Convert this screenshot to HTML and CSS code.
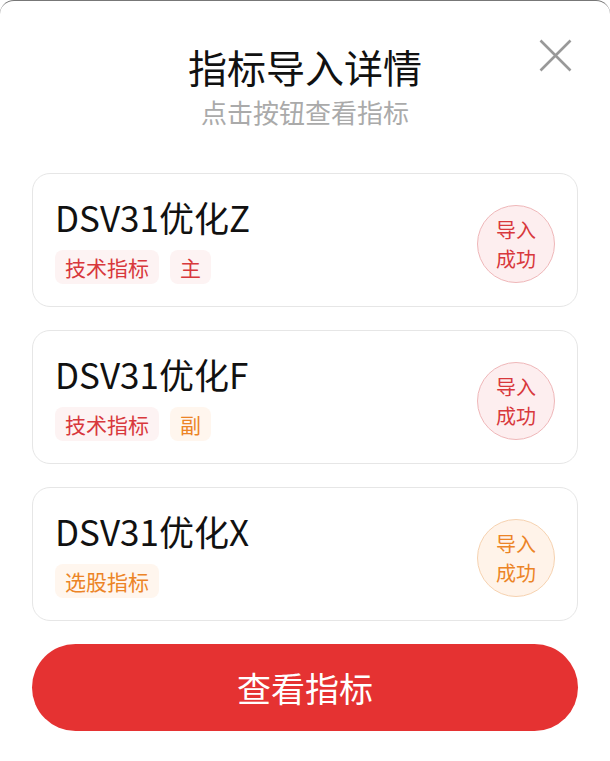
FILE: index.html
```html
<!DOCTYPE html>
<html lang="zh-CN">
<head>
    <meta charset="UTF-8">
    <meta name="viewport" content="width=device-width, initial-scale=1.0">
    <title>指标导入详情</title>
    <link rel="stylesheet" href="styles.css">
</head>
<body>

<div class="sheet">
    <button class="close" aria-label="关闭">
        <svg width="33" height="33" viewBox="0 0 33 33">
            <path d="M1.5 1.5 L31.5 31.5 M31.5 1.5 L1.5 31.5" stroke="#999" stroke-width="2.6" fill="none"/>
        </svg>
    </button>

    <h1 class="title">指标导入详情</h1>
    <p class="subtitle">点击按钮查看指标</p>

    <div class="list">
        <div class="card">
            <div class="info">
                <div class="name">DSV31优化Z</div>
                <div class="tags">
                    <span class="tag red">技术指标</span>
                    <span class="tag red">主</span>
                </div>
            </div>
            <div class="badge red">导入<br>成功</div>
        </div>

        <div class="card">
            <div class="info">
                <div class="name">DSV31优化F</div>
                <div class="tags">
                    <span class="tag red">技术指标</span>
                    <span class="tag orange">副</span>
                </div>
            </div>
            <div class="badge red">导入<br>成功</div>
        </div>

        <div class="card">
            <div class="info">
                <div class="name">DSV31优化X</div>
                <div class="tags">
                    <span class="tag orange">选股指标</span>
                </div>
            </div>
            <div class="badge orange">导入<br>成功</div>
        </div>
    </div>

    <button class="main-btn">查看指标</button>
</div>

</body>
</html>
```

FILE: styles.css
```css
* {
    box-sizing: border-box;
}
body {
    margin: 0;
    background-color: #fff;
    font-family: "Noto Sans CJK SC", "Noto Sans", sans-serif;
}
.sheet {
    position: relative;
    width: 610px;
    height: 761px;
    padding: 40px 32px 0;
    background: #fff;
    border-top: 1px solid #777;
    border-radius: 14px 14px 10px 10px;
}
.close {
    position: absolute;
    top: 38px;
    right: 38px;
    width: 33px;
    height: 33px;
    padding: 0;
    border: none;
    background: none;
}
.close svg {
    display: block;
}
.title {
    margin: 0;
    text-align: center;
    font-size: 39px;
    line-height: 50px;
    font-weight: 400;
    color: #111;
}
.subtitle {
    margin: 3px 0 0;
    text-align: center;
    font-size: 26px;
    line-height: 36px;
    color: #aaa;
}
.list {
    display: flex;
    flex-direction: column;
    gap: 23px;
    margin-top: 43px;
}
.card {
    display: flex;
    align-items: center;
    justify-content: space-between;
    height: 134px;
    padding: 21px 22px 22px 22px;
    border: 1px solid #e6e6e6;
    border-radius: 18px;
}
.name {
    font-size: 35px;
    line-height: 44px;
    color: #111;
}
.tags {
    display: flex;
    gap: 11px;
    margin-top: 11px;
}
.tag {
    height: 34px;
    padding: 0 10px;
    border-radius: 8px;
    font-size: 21px;
    line-height: 34px;
}
.tag.red {
    color: #d8383c;
    background-color: #fdf3f3;
}
.tag.orange {
    color: #ec8426;
    background-color: #fff6ee;
}
.badge {
    width: 78px;
    height: 78px;
    margin-top: 8px;
    border-radius: 50%;
    border: 1px solid;
    display: flex;
    align-items: center;
    justify-content: center;
    text-align: center;
    font-size: 20px;
    line-height: 29px;
}
.badge.red {
    color: #d8383c;
    background-color: #fdeeef;
    border-color: #efb7b9;
}
.badge.orange {
    color: #ec8426;
    background-color: #fff3e9;
    border-color: #f6d2b0;
}
.main-btn {
    display: block;
    width: 100%;
    height: 87px;
    margin-top: 23px;
    border: none;
    border-radius: 44px;
    background-color: #e53232;
    color: #fff;
    font-family: inherit;
    font-size: 34px;
}
```
